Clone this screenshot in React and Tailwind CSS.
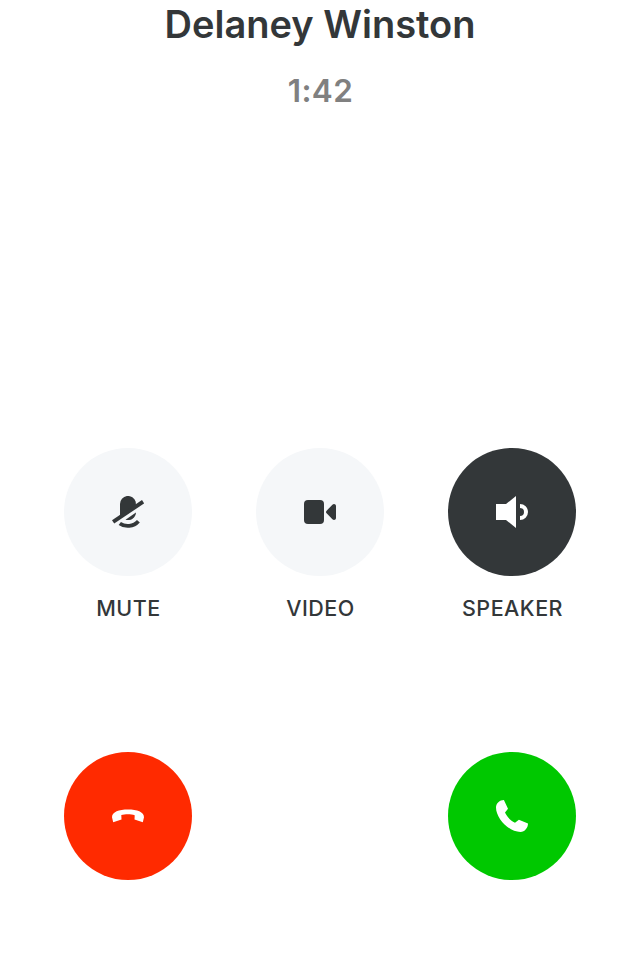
const MuteIcon = () => (
  <svg className="size-8" viewBox="0 0 32 32" fill="currentColor">
    <path d="M8 8a8 8 0 0 1 15.700-2.200L24 10 8 21Z" />
    <path d="M0 24.200 30 4l2.100 3.400L2.200 27.600Z" />
    <path d="M24 16.400A8 8 0 0 1 13.500 23.700Z" />
    <path d="M7.800 27.400C13 31.300 21.500 30.800 26.400 25.200" fill="none" stroke="currentColor" strokeWidth="3.800" />
  </svg>
);

const VideoIcon = () => (
  <svg className="size-8" viewBox="0 0 32 32" fill="currentColor">
    <rect y="4" width="20" height="24" rx="4" />
    <path d="m22.600 14.700 5.800-6C29.700 7.400 32 8 32 10v12c0 2-2.300 2.600-3.600 1.300l-5.800-6c-.8-.8-.8-1.800 0-2.600Z" />
  </svg>
);

const SpeakerIcon = () => (
  <svg className="size-8" viewBox="0 0 32 32" fill="currentColor">
    <path d="M0 8h10L20 0v32L10 24H0Z" />
    <path d="M24 8a8 8 0 0 1 0 16v-4a4 4 0 0 0 0-8Z" />
  </svg>
);

const HangUpIcon = () => (
  <svg className="size-8" viewBox="0 0 32 32" fill="currentColor">
    <path d="M0 17.200C0 11.800 7 9.500 16 9.500s16 2.300 16 7.700l-1.200 5-8.300-2.800.2-4.200C19 14 13 14 9.300 15.100l.2 4.300-8.300 2.800Z" />
  </svg>
);

const CallIcon = () => (
  <svg className="size-8" viewBox="0 0 32 32" fill="currentColor">
    <path d="M7.900 0 12 8.700 9 12.600c1.900 4 5.600 8 10 10.200l3.900-3L32 23.600c0 4.400-3.300 8.400-7.500 8.400C13 32 0 18.300 0 7.400 0 3.500 3.700 0 7.900 0Z" />
  </svg>
);

const Control = ({ label, color = "bg-[#f5f7f9] text-[#333739]", children }) => (
  <div className="flex w-32 flex-col items-center">
    <button aria-label={label} className={`flex size-32 items-center justify-center rounded-full ${color}`}>
      {children}
    </button>
    <span className="mt-4 pl-px text-[21.5px] leading-8 font-medium tracking-[0.5px]">{label}</span>
  </div>
);

export default function App() {
  return (
    <main className="flex h-[960px] w-[640px] flex-col overflow-hidden bg-white font-['Inter',sans-serif] text-[#333739] antialiased">
      <header className="flex h-[448px] flex-col items-center">
        <h1 className="text-[38px] leading-12 font-semibold">Delaney Winston</h1>
        <p className="mt-[23px] pl-px text-[31.5px] leading-10 font-semibold tracking-[0.4px] text-[#808080]">1:42</p>
      </header>
      <section className="flex h-[304px] justify-between px-16">
        <Control label="MUTE"><MuteIcon /></Control>
        <Control label="VIDEO"><VideoIcon /></Control>
        <Control label="SPEAKER" color="bg-[#333739] text-white"><SpeakerIcon /></Control>
      </section>
      <footer className="flex justify-between px-16 text-white">
        <button aria-label="End call" className="flex size-32 items-center justify-center rounded-full bg-[#ff2a00]">
          <HangUpIcon />
        </button>
        <button aria-label="Call" className="flex size-32 items-center justify-center rounded-full bg-[#00c800]">
          <CallIcon />
        </button>
      </footer>
    </main>
  );
}
